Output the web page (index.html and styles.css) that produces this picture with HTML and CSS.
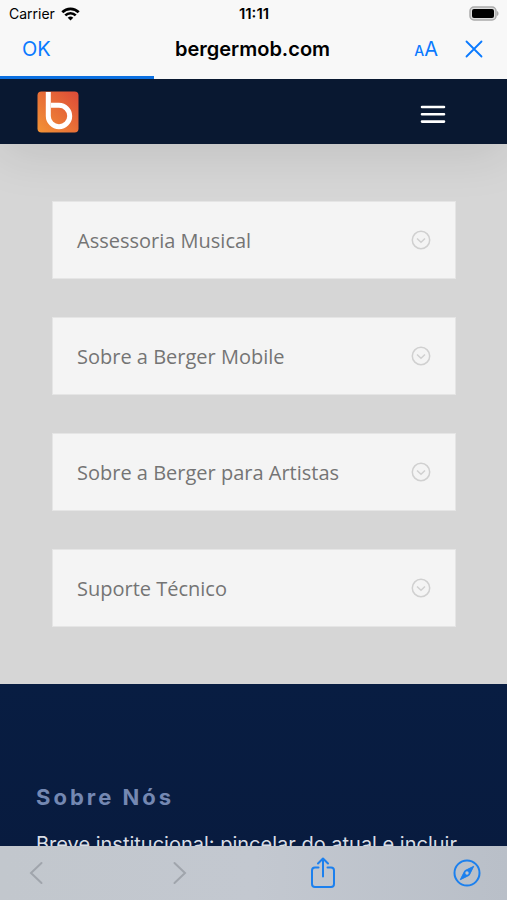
FILE: index.html
```
<!DOCTYPE html>
<html lang="pt-BR">
<head>
    <meta charset="UTF-8">
    <meta name="viewport" content="width=device-width, initial-scale=1.0">
    <title>bergermob.com</title>
    <link rel="stylesheet" href="styles.css">
</head>
<body>
    <div class="status-bar">
        <div class="carrier">
            <span>Carrier</span>
            <svg width="19" height="14" viewBox="0 0 19 14" fill="none" stroke="#000" stroke-width="2.700">
                <path d="M1.300 5.200a11.600 11.600 0 0 1 16.400 0"/>
                <path d="M4.300 8.400a7.400 7.400 0 0 1 10.400 0"/>
                <path d="M9.500 13.600 6.700 10.800a4 4 0 0 1 5.600 0z" fill="#000" stroke="none"/>
            </svg>
        </div>
        <span class="time">11:11</span>
        <svg class="battery" width="31" height="15" viewBox="0 0 31 15">
            <rect x="2" y="1" width="26" height="13" rx="4" fill="#ddd" stroke="#aaa" stroke-width="1.500"/>
            <rect x="4" y="3" width="22" height="9" rx="2" fill="#000"/>
            <path d="M29 5v5c2-.8 2-4.200 0-5z" fill="#aaa"/>
        </svg>
    </div>
    <div class="nav-bar">
        <button class="ok">OK</button>
        <span class="domain">bergermob.com</span>
        <div class="nav-actions">
            <button class="text-size" aria-label="Tamanho do texto"><span class="small-a">A</span>A</button>
            <button aria-label="Fechar">
                <svg width="18" height="18" viewBox="0 0 18 18" fill="none" stroke="#0a7aff" stroke-width="1.800" stroke-linecap="round">
                    <path d="M1.500 1.500l15 15M16.500 1.500l-15 15"/>
                </svg>
            </button>
        </div>
    </div>
    <div class="progress"><div class="progress-fill"></div></div>

    <main class="page">
        <header class="site-header">
            <a href="#" aria-label="Berger">
                <svg width="42" height="42" viewBox="0 0 42 42" fill="none">
                    <defs>
                        <linearGradient id="logo" x1="0" y1="1" x2="1" y2="0">
                            <stop offset="0" stop-color="#f39436"/>
                            <stop offset="1" stop-color="#dd4a38"/>
                        </linearGradient>
                    </defs>
                    <rect x=".5" y=".5" width="41" height="41" rx="4" fill="url(#logo)"/>
                    <path d="M11.300 1V25A10.700 10.700 0 1 0 22 14.300H14" stroke="#fff" stroke-width="5"/>
                </svg>
            </a>
            <button class="menu" aria-label="Menu">
                <svg width="26" height="20" viewBox="0 0 26 20" stroke="#fff" stroke-width="2.600" stroke-linecap="round">
                    <path d="M2 3h22M2 10.300h22M2 17.600h22"/>
                </svg>
            </button>
        </header>

        <section class="faq">
            <button class="toggle">
                <span>Assessoria Musical</span>
                <svg class="chevron" width="20" height="20" viewBox="0 0 20 20"><circle cx="10" cy="10" r="8.700"/><path d="M6 8.500l4 3.700 4-3.700"/></svg>
            </button>
            <button class="toggle">
                <span>Sobre a Berger Mobile</span>
                <svg class="chevron" width="20" height="20" viewBox="0 0 20 20"><circle cx="10" cy="10" r="8.700"/><path d="M6 8.500l4 3.700 4-3.700"/></svg>
            </button>
            <button class="toggle">
                <span>Sobre a Berger para Artistas</span>
                <svg class="chevron" width="20" height="20" viewBox="0 0 20 20"><circle cx="10" cy="10" r="8.700"/><path d="M6 8.500l4 3.700 4-3.700"/></svg>
            </button>
            <button class="toggle">
                <span>Suporte Técnico</span>
                <svg class="chevron" width="20" height="20" viewBox="0 0 20 20"><circle cx="10" cy="10" r="8.700"/><path d="M6 8.500l4 3.700 4-3.700"/></svg>
            </button>
        </section>

        <footer class="about">
            <h2>Sobre Nós</h2>
            <p>Breve institucional: pincelar do atual e incluir</p>
        </footer>
    </main>

    <nav class="toolbar">
        <button aria-label="Voltar" disabled>
            <svg width="14" height="24" viewBox="0 0 14 24" fill="none" stroke="#a0a5ac" stroke-width="2" stroke-linecap="round"><path d="M12.500 2L2 12l10.500 10"/></svg>
        </button>
        <button aria-label="Avançar" disabled>
            <svg width="14" height="24" viewBox="0 0 14 24" fill="none" stroke="#a0a5ac" stroke-width="2" stroke-linecap="round"><path d="M1.500 2L12 12 1.500 22"/></svg>
        </button>
        <button aria-label="Compartilhar">
            <svg width="26" height="32" viewBox="0 0 26 32" fill="none" stroke="#1c80ee" stroke-width="2" stroke-linecap="round" stroke-linejoin="round">
                <path d="M8.500 10.500H5a3 3 0 0 0-3 3V27a3 3 0 0 0 3 3h16a3 3 0 0 0 3-3V13.500a3 3 0 0 0-3-3h-3.500"/>
                <path d="M13 19.500V2M8 6.500L13 1.500l5 5"/>
            </svg>
        </button>
        <button aria-label="Abrir no Safari">
            <svg width="28" height="28" viewBox="0 0 28 28" fill="none">
                <circle cx="14" cy="14" r="12.500" stroke="#1c80ee" stroke-width="2"/>
                <path d="M20.700 7.300l-4.500 9-8.900 4.400 4.500-9z" fill="#1c80ee" stroke="#1c80ee" stroke-linejoin="round"/>
                <circle cx="14" cy="14" r="1.700" fill="#c1c6cf"/>
            </svg>
        </button>
    </nav>
</body>
</html>
```
FILE: styles.css
```
* {
    box-sizing: border-box;
}

body {
    margin: 0;
    height: 100vh;
    display: flex;
    flex-direction: column;
    overflow: hidden;
    background-color: #f8f8f8;
    font-family: Inter, 'Liberation Sans', sans-serif;
    color: #000;
}

button {
    padding: 0;
    border: 0;
    background: none;
    font: inherit;
    color: inherit;
}

svg {
    display: block;
}

.status-bar, .nav-bar {
    display: grid;
    grid-template-columns: 1fr auto 1fr;
    align-items: center;
    flex: none;
}

.status-bar {
    height: 27px;
    padding: 0 8px 0 9px;
    font-size: 14px;
}

.carrier {
    display: flex;
    align-items: center;
    gap: 6px;
}

.time {
    font-size: 15px;
    font-weight: 600;
}

.battery {
    justify-self: end;
}

.nav-bar {
    height: 49px;
    padding: 0 24px 5px 22px;
    font-size: 20px;
    color: #0a7aff;
}

.ok {
    justify-self: start;
}

.domain {
    font-weight: 600;
    color: #000;
}

.nav-actions {
    display: flex;
    justify-content: flex-end;
    align-items: center;
    gap: 27px;
}

.small-a {
    font-size: 14px;
    font-weight: 500;
}

.progress {
    flex: none;
    height: 3px;
}

.progress-fill {
    width: 30.4%;
    height: 100%;
    background-color: #0b6fe0;
}

/* site */
.page {
    flex: 1;
    min-height: 0;
    overflow: hidden;
    background-color: #081a40;
}

.site-header {
    position: relative;
    display: flex;
    justify-content: space-between;
    align-items: center;
    height: 65px;
    padding: 0 61px 0 37px;
    background-color: #091831;
    box-shadow: 0 10px 50px rgba(0, 0, 0, 0.1);
}

.menu {
    padding-top: 4px;
}

.faq {
    display: flex;
    flex-direction: column;
    gap: 38px;
    padding: 57px 51px 57px 52px;
    background-color: #d6d6d6;
}

.toggle {
    display: flex;
    justify-content: space-between;
    align-items: center;
    height: 78px;
    padding: 0 24px;
    border: 1px solid #e5e5e5;
    background-color: #f4f4f4;
    font-family: 'Open Sans', sans-serif;
    font-size: 20px;
    color: #747474;
}

.chevron {
    fill: none;
    stroke: #d0d0d0;
    stroke-width: 1.5;
}

.about {
    padding: 97px 36px;
    background: linear-gradient(#081d42, #081a3d);
}

.about h2 {
    margin: 0 0 16px;
    font-size: 22px;
    line-height: 32px;
    letter-spacing: 3px;
    color: #7488b2;
}

.about p {
    margin: 0;
    font-size: 20px;
    line-height: 30px;
    color: #d9dee6;
}

.toolbar {
    flex: none;
    display: flex;
    justify-content: space-between;
    align-items: center;
    height: 54px;
    padding: 0 26px 0 22px;
    background: linear-gradient(90deg, #c2c7cd, #c3c8d0 50%, #b9bfc8);
}

.toolbar button {
    display: flex;
    justify-content: center;
    width: 28px;
}
```
